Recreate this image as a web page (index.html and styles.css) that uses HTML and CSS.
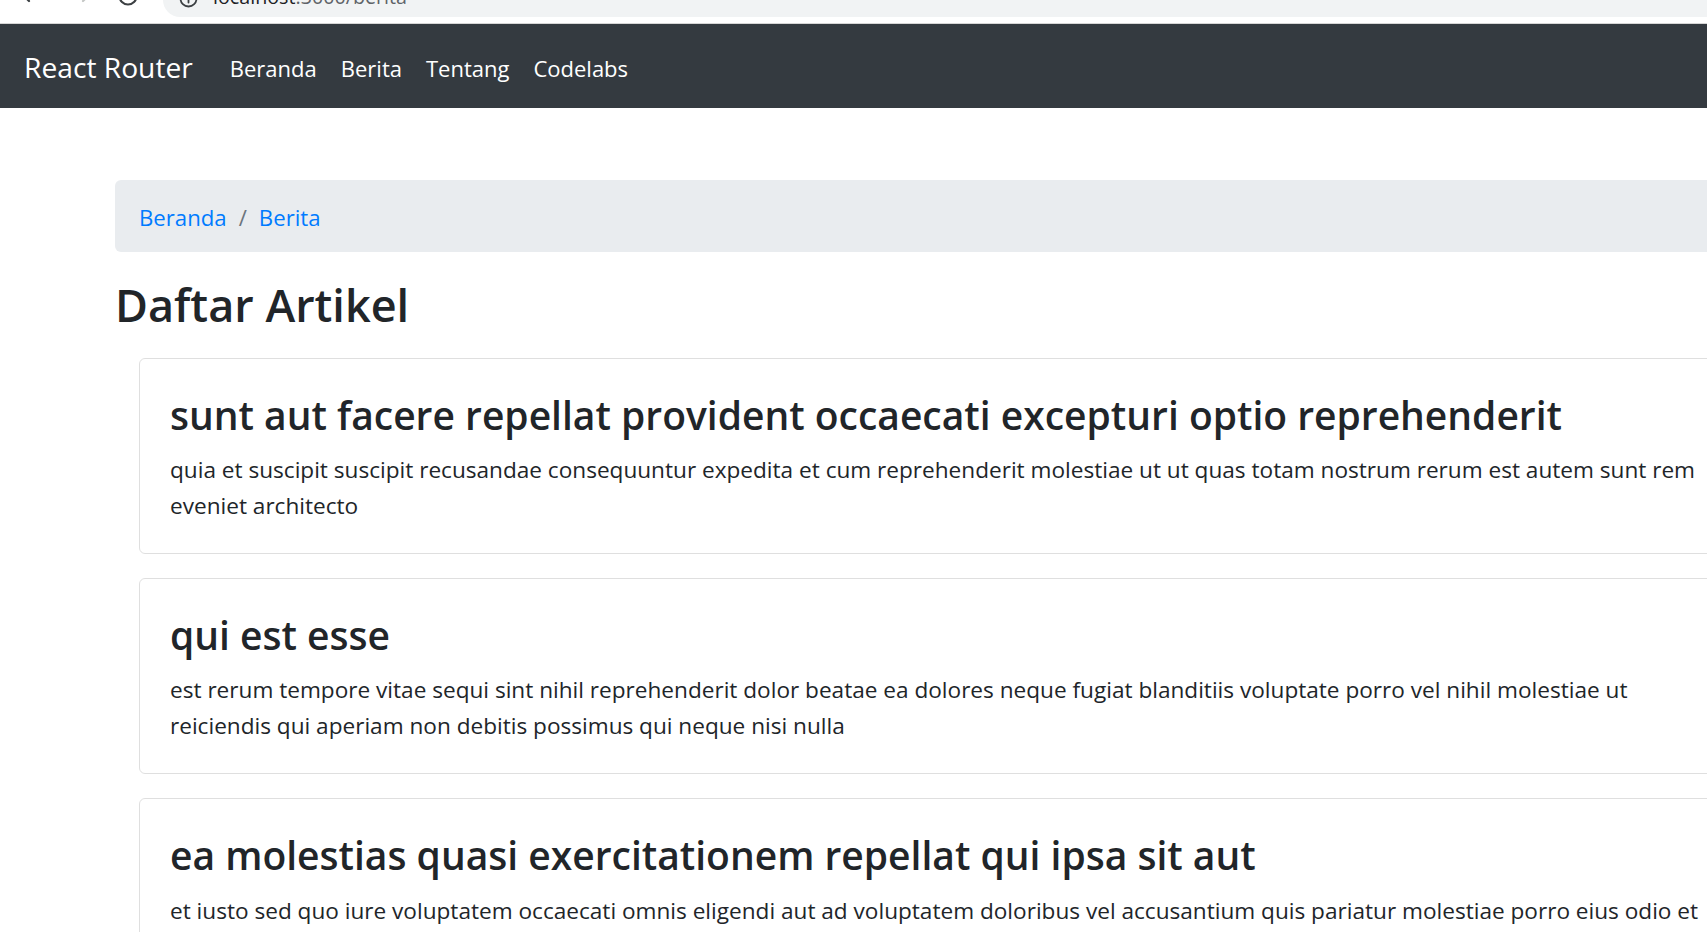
FILE: index.html
```html
<!DOCTYPE html>
<html lang="id">
<head>
<meta charset="utf-8">
<title>React Router - Berita</title>
<link rel="stylesheet" href="styles.css">
</head>
<body>
<div class="chrome">
  <svg class="chrome-icons" width="163" height="23" viewBox="0 0 163 23" aria-hidden="true">
    <path d="M40 -6 H22 M29 -13 L22 -6 L29 1" fill="none" stroke="#3c4043" stroke-width="2.2" stroke-linecap="round" stroke-linejoin="round"/>
    <path d="M72 -6 H90 M83 -13 L90 -6 L83 1" fill="none" stroke="#c4c7c5" stroke-width="2.2" stroke-linecap="round" stroke-linejoin="round"/>
    <circle cx="128" cy="-4" r="8.5" fill="none" stroke="#3c4043" stroke-width="2.2"/>
  </svg>
  <div class="omnibox">
    <svg class="info-icon" width="20" height="17" viewBox="0 0 20 17" aria-hidden="true">
      <circle cx="9.5" cy="-1.5" r="8" fill="none" stroke="#3c4043" stroke-width="1.8"/>
      <path d="M9.5 -2 V2.5" stroke="#3c4043" stroke-width="1.8" stroke-linecap="round"/>
    </svg>
    <span class="url"><span class="url-host">localhost</span><span class="url-path">:3000/berita</span></span>
  </div>
</div>

<nav class="navbar">
  <a class="brand" href="#">React Router</a>
  <ul class="nav">
    <li><a class="nav-link" href="#">Beranda</a></li>
    <li><a class="nav-link" href="#">Berita</a></li>
    <li><a class="nav-link" href="#">Tentang</a></li>
    <li><a class="nav-link" href="#">Codelabs</a></li>
  </ul>
</nav>

<main class="page">
  <ol class="breadcrumb">
    <li class="crumb"><a href="#">Beranda</a></li>
    <li class="crumb"><a href="#">Berita</a></li>
  </ol>

  <h2 class="page-title">Daftar Artikel</h2>

  <div class="articles">
    <article class="card">
      <div class="card-body">
        <h3 class="card-title">sunt aut facere repellat provident occaecati excepturi optio reprehenderit</h3>
        <p class="card-text">quia et suscipit suscipit recusandae consequuntur expedita et cum reprehenderit molestiae ut ut quas totam nostrum rerum est autem sunt rem eveniet architecto</p>
      </div>
    </article>
    <article class="card">
      <div class="card-body">
        <h3 class="card-title">qui est esse</h3>
        <p class="card-text">est rerum tempore vitae sequi sint nihil reprehenderit dolor beatae ea dolores neque fugiat blanditiis voluptate porro vel nihil molestiae ut reiciendis qui aperiam non debitis possimus qui neque nisi nulla</p>
      </div>
    </article>
    <article class="card">
      <div class="card-body">
        <h3 class="card-title">ea molestias quasi exercitationem repellat qui ipsa sit aut</h3>
        <p class="card-text">et iusto sed quo iure voluptatem occaecati omnis eligendi aut ad voluptatem doloribus vel accusantium quis pariatur molestiae porro eius odio et labore et velit aut</p>
      </div>
    </article>
    <article class="card">
      <div class="card-body">
        <h3 class="card-title">eum et est occaecati</h3>
        <p class="card-text">ullam et saepe reiciendis voluptatem adipisci sit amet autem assumenda provident rerum culpa quis hic commodi nesciunt rem tenetur doloremque ipsam iure quis sunt voluptatem rerum illo velit</p>
      </div>
    </article>
  </div>
</main>
</body>
</html>
```

FILE: styles.css
```css
* {
  box-sizing: border-box;
}

html,
body {
  margin: 0;
  overflow: hidden;
}

body {
  font-family: "Open Sans", "Noto Sans", sans-serif;
  color: #212529;
  background: #fff;
}

/* browser chrome strip */
.chrome {
  display: flex;
  height: 24px;
  background: #fff;
  border-bottom: 1px solid #d6d6d6;
  overflow: hidden;
}

.chrome-icons {
  flex: none;
  display: block;
}

.omnibox {
  flex: 1;
  display: flex;
  align-items: flex-start;
  height: 17px;
  padding-left: 16px;
  background: #f1f3f4;
  border-bottom-left-radius: 17px;
  overflow: hidden;
}

.info-icon {
  flex: none;
  display: block;
}

.url {
  display: block;
  margin-left: 14px;
  margin-top: -12.6px;
  font-size: 19.7px;
  line-height: 20px;
  white-space: nowrap;
}

.url-host {
  color: #202124;
}

.url-path {
  color: #5f6368;
}

/* navbar */
.navbar {
  display: flex;
  align-items: center;
  padding: 12px 24px;
  background: #343a40;
}

.brand {
  padding: 9px 0 6px;
  margin-right: 25px;
  font-size: 28.2px;
  line-height: 45px;
  color: #fff;
  text-decoration: none;
  white-space: nowrap;
}

.nav {
  display: flex;
  list-style: none;
  margin: 0;
  padding: 0;
}

.nav-link {
  display: block;
  padding: 14px 12px 10px;
  font-size: 22px;
  line-height: 36px;
  color: #fff;
  text-decoration: none;
}

/* page */
.page {
  width: 1665px;
  margin-left: 115px;
  padding-top: 72px;
}

.breadcrumb {
  display: flex;
  list-style: none;
  margin: 0 0 24px;
  padding: 20px 24px 16px;
  background: #e9ecef;
  border-radius: 6px;
  font-size: 22.2px;
  line-height: 36px;
}

.crumb a {
  color: #007bff;
  text-decoration: none;
}

.crumb + .crumb {
  padding-left: 12px;
}

.crumb + .crumb::before {
  content: "/";
  padding-right: 12px;
  color: #6c757d;
}

.page-title {
  margin: 0 0 12px;
  padding-top: 1px;
  font-size: 45px;
  font-weight: 600;
  line-height: 56.6px;
}

.card {
  margin: 24px;
  border: 1px solid rgba(0, 0, 0, 0.125);
  border-radius: 6px;
}

.card-body {
  padding: 31px 30px 29px;
}

.card-title {
  margin: 0 0 12px;
  font-size: 39px;
  font-weight: 600;
  line-height: 50.4px;
}

.card-text {
  margin: 0;
  font-size: 22.6px;
  line-height: 36px;
}
```
